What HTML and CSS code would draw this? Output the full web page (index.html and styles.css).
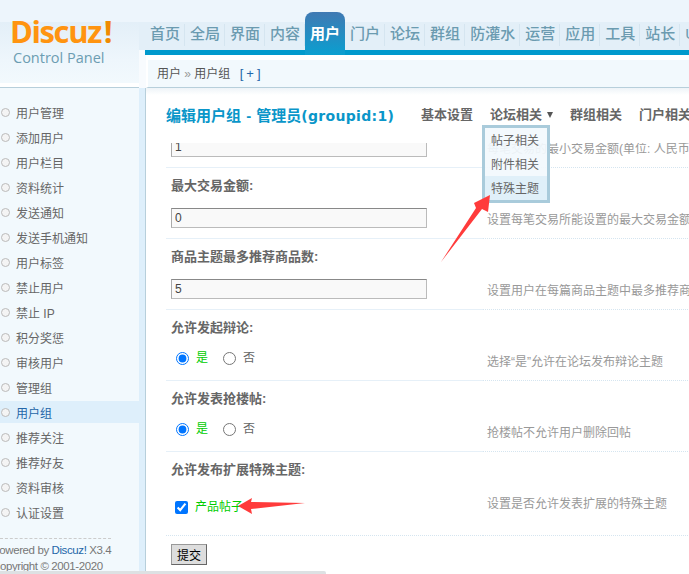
FILE: index.html
```html
<!DOCTYPE html>
<html lang="zh">
<head>
<meta charset="utf-8">
<title>编辑用户组</title>
<link rel="stylesheet" href="styles.css">
</head>
<body>
<div class="app">
  <aside class="side">
    <div class="logo">
      <div class="logo-word">Discuz<span class="bang">!</span></div>
      <div class="logo-sub">Control Panel</div>
    </div>
    <ul class="menu">
      <li>用户管理</li><li>添加用户</li><li>用户栏目</li><li>资料统计</li><li>发送通知</li>
      <li>发送手机通知</li><li>用户标签</li><li>禁止用户</li><li>禁止 IP</li><li>积分奖惩</li>
      <li>审核用户</li><li>管理组</li><li class="on">用户组</li><li>推荐关注</li><li>推荐好友</li>
      <li>资料审核</li><li>认证设置</li>
    </ul>
    <div class="copy">
      <p>Powered by <span class="brand">Discuz!</span> X3.4</p>
      <p>Copyright © 2001-2020</p>
    </div>
  </aside>
  <div class="rail"></div>
  <main class="main">
    <nav class="nav">
      <a>首页</a><a>全局</a><a>界面</a><a>内容</a><a class="cur">用户</a><a>门户</a><a>论坛</a><a>群组</a><a>防灌水</a><a>运营</a><a>应用</a><a>工具</a><a>站长</a><a>UCenter</a>
    </nav>
    <div class="crumb">用户 <span class="sep">»</span> 用户组 <span class="plus">[+]</span></div>
    <div class="head">
      <h3>编辑用户组 - 管理员<span class="gid">(groupid:1)</span></h3>
      <div class="tabs">
        <span>基本设置</span><span class="drop">论坛相关<i class="tri"></i></span><span>群组相关</span><span>门户相关</span>
      </div>
    </div>
    <div class="form">
      <div class="row first">
        <div class="cell"><input class="txt" type="text" value="1"></div>
        <div class="tip">每笔交易的最小交易金额(单位: 人民币)</div>
      </div>
      <div class="row">
        <div class="cell"><label class="ttl">最大交易金额:</label><input class="txt" type="text" value="0"></div>
        <div class="tip">设置每笔交易所能设置的最大交易金额(单位: 人民币)</div>
      </div>
      <div class="row">
        <div class="cell"><label class="ttl">商品主题最多推荐商品数:</label><input class="txt" type="text" value="5"></div>
        <div class="tip">设置用户在每篇商品主题中最多推荐商品的数目</div>
      </div>
      <div class="row">
        <div class="cell"><label class="ttl">允许发起辩论:</label>
          <div class="opts"><input type="radio" name="a" checked><span class="yes">是</span><input type="radio" name="a"><span>否</span></div></div>
        <div class="tip">选择“是”允许在论坛发布辩论主题</div>
      </div>
      <div class="row">
        <div class="cell"><label class="ttl">允许发表抢楼帖:</label>
          <div class="opts"><input type="radio" name="b" checked><span class="yes">是</span><input type="radio" name="b"><span>否</span></div></div>
        <div class="tip">抢楼帖不允许用户删除回帖</div>
      </div>
      <div class="row last">
        <div class="cell"><label class="ttl">允许发布扩展特殊主题:</label>
          <div class="opts check"><input type="checkbox" checked><span class="yes">产品帖子</span></div></div>
        <div class="tip">设置是否允许发表扩展的特殊主题</div>
      </div>
      <div class="submit"><button type="button">提交</button></div>
    </div>
    <div class="dropmenu">
      <div>帖子相关</div><div>附件相关</div><div class="hover">特殊主题</div>
    </div>
  </main>
  <svg class="arrows" width="689" height="574" viewBox="0 0 689 574" aria-hidden="true">
    <polygon points="441,262 476,208 474,203 490,195 488,212 482,209"/>
    <polygon points="238,506 252,498 251,502 305,503 251,509 252,514"/>
  </svg>
  <div class="hbar"></div>
</div>
</body>
</html>
```
FILE: styles.css
```css
* { box-sizing: border-box; }
html, body { margin: 0; padding: 0; }
body { font: 12px/1.4 "Liberation Sans", "Noto Sans CJK SC", sans-serif; color: #666; background: #fff; }
ul { margin: 0; padding: 0; list-style: none; }
p { margin: 0; }

.app { position: relative; display: flex; width: 689px; height: 574px; overflow: hidden; }

/* left column */
.side { flex: 0 0 139px; background: #f2f9fd; display: flex; flex-direction: column; }
.logo { height: 88px; padding: 16px 0 0 10px; border-bottom: 1px solid #b7cfdb;
  background: linear-gradient(#edf5fc 0 22px, #e3eff8 22px, #eef6fc 60px, #f2f9fd 83px, #fff 83px); }
.logo-word { font: bold 31px/30px "Open Sans", sans-serif; letter-spacing: -1.4px; color: #ff9410; }
.bang { color: #f08a00; margin-left: 3px; }
.logo-sub { font: 14.5px/18px "Open Sans", sans-serif; color: #6c9db2; margin: 3px 0 0 3px; }
.menu { padding-top: 13px; }
.menu li { position: relative; height: 22px; margin-bottom: 3px; padding-left: 16px; line-height: 26px; font-size: 12px; color: #666; }
.menu li::before { content: ""; position: absolute; left: 1px; top: 7px; width: 7px; height: 7px; border: 1px solid #bbb; border-radius: 50%; background: #f4f4f4; }
.menu .on { background: #deeffb; color: #2366a8; }
.copy { margin-top: 12px; width: 111px; border-top: 1px dashed #ccc; padding-top: 3px; font-size: 11.5px; letter-spacing: -.4px; line-height: 16px; color: #777; white-space: nowrap; text-indent: -8px; }
.brand { color: #2366a8; }

.rail { flex: 0 0 7px; margin-top: 88px; background: #deeffb; border-right: 1px solid #b7cfdb; }

/* right column */
.main { position: relative; flex: 1; min-width: 0; display: flex; flex-direction: column; margin-left: -7px;
  background: linear-gradient(#edf5fc 0 22px, #e3eff8 22px 50px, #f8fbfe 50px 88px, transparent 88px); }
.nav { display: flex; height: 55px; margin-left: 6px; padding: 22px 0 0 0; border-bottom: 5px solid #09c; white-space: nowrap;
  background: linear-gradient(#edf5fc 0 22px, #e3eff8 22px); }
.nav a { position: relative; flex: none; padding: 0 5px; height: 28px; line-height: 24px; font-size: 15px; font-weight: 500; color: #6b9bb0; }
.nav a:not(.cur)::after { content: ""; position: absolute; right: 0; top: 2px; height: 22px; width: 1px; background: #d5e5f0; }
.nav a.cur { height: 43px; margin-top: -10px; line-height: 44px; border-radius: 8px 8px 0 0; color: #fff; font-weight: 700;
  background: linear-gradient(#4079b3, #0a9fd0); }
.crumb { height: 33px; margin-left: 7px; padding: 0 0 0 9px; border-top: 5px solid #fff; border-left: 2px solid #fff; border-bottom: 1px solid #b7cfdb; line-height: 27px; color: #555; background: #f2f9fd; white-space: nowrap; }
.sep { color: #999; }
.plus { margin-left: 6px; font-size: 13px; color: #2366a8; letter-spacing: 3px; }

.head { flex: none; display: flex; align-items: center; height: 55px; margin-left: 7px; padding: 0 0 0 20px; white-space: nowrap; background: linear-gradient(#eef4f8, #fff 7px); }
.head h3 { flex: 0 0 255px; margin: 0; font-size: 15px; line-height: 20px; font-weight: 700; word-spacing: 1px; color: #0a96c9; }
.gid { font: bold 14px/20px "DejaVu Sans", sans-serif; letter-spacing: .3px; }
.tabs { display: flex; font-size: 13px; font-weight: 700; color: #666; }
.tabs span { flex: none; padding-right: 17px; }
.tri { display: inline-block; width: 0; height: 0; margin-left: 5px; vertical-align: 1px; border: 3.5px solid transparent; border-top: 6px solid #555; border-bottom: 0; }

.form { margin-left: 27px; width: 660px; background: #fff; }
.row { display: flex; height: 71px; white-space: nowrap; }
.cell { flex: 0 0 317px; padding: 9px 0 0 5px; border-bottom: 1px solid #e6f0f8; }
.tip { flex: 1; padding: 44px 0 0 4px; line-height: 16px; color: #999; font-size: 12px; border-bottom: 1px dotted #d5e5f0; }
.row.first { height: 25px; }
.row.first .cell { padding-top: 0; overflow: hidden; }
.row.first .txt { margin-top: -6px; }
.row.first .tip { padding-top: 0; overflow: hidden; line-height: 12px; }
.ttl { display: block; height: 18px; font-size: 13px; line-height: 18px; font-weight: 700; color: #666; }
.txt { display: block; width: 256px; height: 20px; margin-top: 13px; padding: 0 3px; font: 12px "Liberation Sans", sans-serif; color: #444; background: #f9f9f9; border: 1px solid #bbb; border-top-color: #888; border-left-color: #aaa; outline: 0; }
.opts { display: flex; align-items: center; height: 16px; margin-top: 13px; padding-left: 5px; color: #666; }
.opts input { width: 13px; height: 13px; margin: 0 7px 0 0; accent-color: #0075ff; flex: none; }
.opts span { margin-right: 15px; }
.yes { color: #0c0; }
.check { margin-top: 20px; padding-left: 4px; }
.row.last { height: 84px; }
.row.last .cell, .row.last .tip { border-bottom-style: dotted; border-bottom-color: #d5e5f0; }
.row.last .tip { padding-top: 44px; }
.submit { padding: 8px 0 0 5px; }
.submit button { display: block; width: 36px; height: 21px; padding: 0; font: 12px/18px "Noto Sans CJK SC", sans-serif; color: #000; background: #ddd; border: 1px solid #999; border-right-color: #666; border-bottom-color: #666; }

.dropmenu { position: absolute; left: 343px; top: 125px; width: 68px; height: 78px; padding: 0; border: 3px solid #a9cbdb; background: rgba(242,249,253,.92); }
.dropmenu div { height: 24px; padding-left: 6px; line-height: 26px; color: #666; }
.dropmenu .hover { background: #e0f0f9; }

.arrows { position: absolute; left: 0; top: 0; pointer-events: none; }
.arrows polygon { fill: #ff3b3b; }
.hbar { position: absolute; left: 0; bottom: 0; width: 326px; height: 3px; background: #dde1e3; border-radius: 0 2px 0 0; }
```
